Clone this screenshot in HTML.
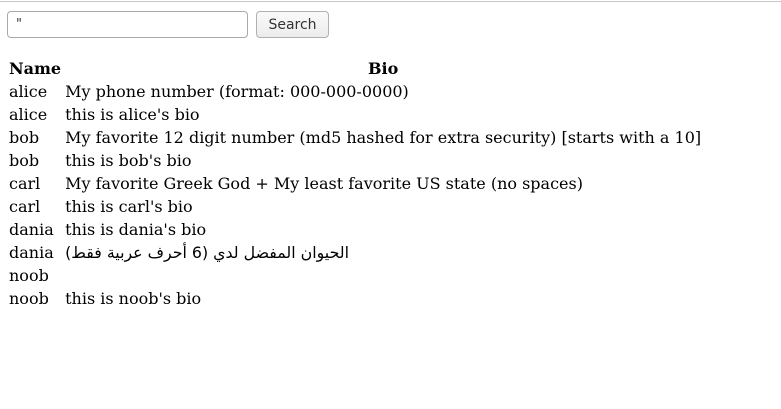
<!DOCTYPE html>
<html><head><meta charset="utf-8"><style>
body{margin:0;width:781px;height:408px;background:#fff;font-family:"DejaVu Serif",serif;font-size:16px;color:#000;overflow:hidden}
.top{border-top:1px solid #c8c8c8;margin-top:1px}
.inp{position:absolute;left:7px;top:11px;width:241px;height:27px;border:1px solid #a9a9a9;border-radius:4px;box-sizing:border-box;font:13px "DejaVu Sans",sans-serif;padding:5px 8px;color:#333}
.btn{position:absolute;left:256px;top:11px;width:73px;height:27px;border:1px solid #b0b0b0;border-radius:4px;box-sizing:border-box;background:linear-gradient(#fafafa,#ececec);font:14px "DejaVu Sans",sans-serif;color:#333;text-align:center;line-height:26px}
table{position:absolute;left:7px;top:57px;border-collapse:collapse}
td,th{padding:0 2px;height:23px;line-height:23px;white-space:nowrap}
th{font-weight:bold}
td:last-child{text-align:left}
</style></head><body>
<div class="top"></div>
<div class="inp">"</div>
<div class="btn">Search</div>
<table>
<tr><th style="text-align:left">Name</th><th>Bio</th></tr>
<tr><td>alice</td><td>My phone number (format: 000-000-0000)</td></tr>
<tr><td>alice</td><td>this is alice's bio</td></tr>
<tr><td>bob</td><td>My favorite 12 digit number (md5 hashed for extra security) [starts with a 10]</td></tr>
<tr><td>bob</td><td>this is bob's bio</td></tr>
<tr><td>carl</td><td>My favorite Greek God + My least favorite US state (no spaces)</td></tr>
<tr><td>carl</td><td>this is carl's bio</td></tr>
<tr><td>dania</td><td>this is dania's bio</td></tr>
<tr><td>dania</td><td><span dir="rtl" style="font-family:'DejaVu Sans',sans-serif;font-size:15.8px">الحيوان المفضل لدي (6 أحرف عربية فقط)</span></td></tr>
<tr><td>noob</td><td></td></tr>
<tr><td>noob</td><td>this is noob's bio</td></tr>
</table>
</body></html>
